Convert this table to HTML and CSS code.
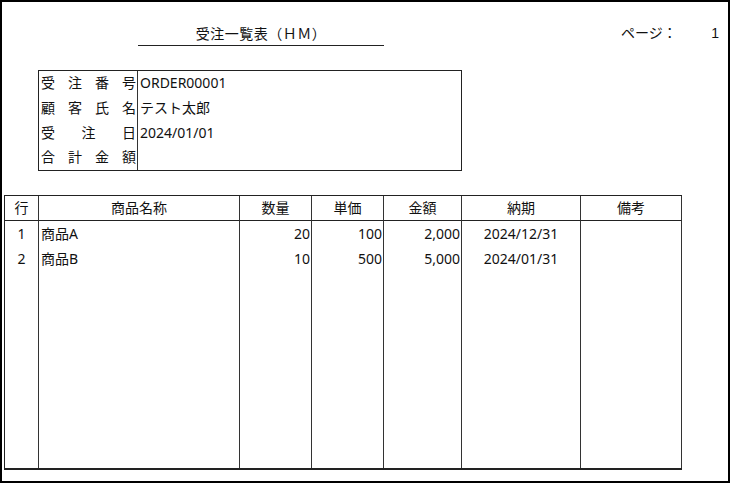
FILE: index.html
```html
<!DOCTYPE html>
<html lang="ja">
<head>
<meta charset="utf-8">
<title>受注一覧表</title>
<link rel="stylesheet" href="styles.css">
</head>
<body>
<div class="frame">
  <header class="head">
    <div class="title">受注一覧表（ＨＭ）</div>
    <div class="page">
      <span class="page-label">ページ：</span>
      <span class="page-no">1</span>
    </div>
  </header>

  <section class="info">
    <div class="info-label">受注番号</div><div class="info-value">ORDER00001</div>
    <div class="info-label">顧客氏名</div><div class="info-value">テスト太郎</div>
    <div class="info-label">受注日</div><div class="info-value">2024/01/01</div>
    <div class="info-label">合計金額</div><div class="info-value"></div>
  </section>

  <section class="items">
    <div class="cell th">行</div>
    <div class="cell th">商品名称</div>
    <div class="cell th">数量</div>
    <div class="cell th">単価</div>
    <div class="cell th">金額</div>
    <div class="cell th">納期</div>
    <div class="cell th">備考</div>

    <div class="cell c">1</div>
    <div class="cell l">商品A</div>
    <div class="cell r">20</div>
    <div class="cell r">100</div>
    <div class="cell r">2,000</div>
    <div class="cell c">2024/12/31</div>
    <div class="cell l"></div>

    <div class="cell c">2</div>
    <div class="cell l">商品B</div>
    <div class="cell r">10</div>
    <div class="cell r">500</div>
    <div class="cell r">5,000</div>
    <div class="cell c">2024/01/31</div>
    <div class="cell l"></div>

    <div class="cell"></div>
    <div class="cell"></div>
    <div class="cell"></div>
    <div class="cell"></div>
    <div class="cell"></div>
    <div class="cell"></div>
    <div class="cell"></div>
  </section>
</div>
</body>
</html>
```

FILE: styles.css
```css
html, body {
  margin: 0;
  padding: 0;
  background: #ffffff;
}

body {
  font-family: "Noto Sans", "Noto Sans CJK JP", sans-serif;
  font-size: 14px;
  color: #111;
}

.frame {
  box-sizing: border-box;
  width: 730px;
  height: 483px;
  border: 2px solid #000;
  background: #fff;
}

.head {
  display: flex;
  align-items: flex-start;
  margin-top: 21px;
  height: 23px;
}

.title {
  margin-left: 136px;
  width: 246px;
  height: 20px;
  line-height: 20px;
  padding-bottom: 2px;
  text-align: center;
  border-bottom: 1px solid #222;
  font-family: "Noto Sans CJK JP", sans-serif;
  text-spacing-trim: space-all;
  letter-spacing: 0.5px;
}

.page {
  display: flex;
  margin-left: 237px;
  line-height: 20px;
}

.page-label {
  width: 56px;
  font-family: "Liberation Sans", "Noto Sans CJK JP", sans-serif;
}

.page-no {
  width: 42px;
  text-align: right;
  font-family: "Liberation Sans", sans-serif;
}

.info {
  display: grid;
  grid-template-columns: 99px 1fr;
  grid-template-rows: repeat(4, 1fr);
  box-sizing: border-box;
  width: 424px;
  height: 101px;
  margin: 24px 0 0 36px;
  border: 1px solid #222;
}

.info-label {
  border-right: 1px solid #333;
  padding: 0 1px 0 2px;
  text-align: justify;
  text-align-last: justify;
  text-justify: inter-character;
  line-height: 24.75px;
  white-space: nowrap;
}

.info-value {
  padding-left: 2px;
  line-height: 24.75px;
}

.items {
  display: grid;
  grid-template-columns: 34px 201px 72px 72px 78px 119px 101px;
  grid-template-rows: 25px 25px 25px 197px;
  width: max-content;
  margin: 24px 0 0 2px;
  border-left: 1px solid #222;
  border-top: 1px solid #222;
  border-bottom: 2px solid #222;
}

.cell {
  box-sizing: border-box;
  border-right: 1px solid #333;
  line-height: 25px;
  white-space: nowrap;
  overflow: hidden;
}

.th {
  text-align: center;
  border-bottom: 1px solid #222;
  line-height: 24px;
}

.c {
  text-align: center;
}

.l {
  padding-left: 2px;
}

.r {
  text-align: right;
  padding-right: 1px;
}
```
